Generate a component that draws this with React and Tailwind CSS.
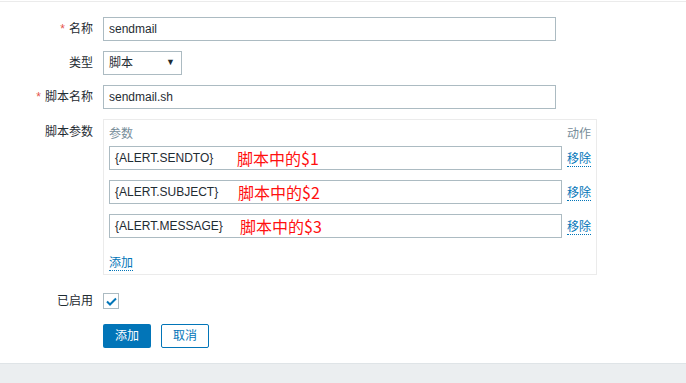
import React from "react";

const font = { fontFamily: '"Liberation Sans", Arial, "Noto Sans CJK SC", sans-serif' };

// red notes are drawn over the inputs, like an annotation
const params = [
  { value: "{ALERT.SENDTO}", note: "脚本中的$1", left: "left-[127px]" },
  { value: "{ALERT.SUBJECT}", note: "脚本中的$2", left: "left-[128px]" },
  { value: "{ALERT.MESSAGE}", note: "脚本中的$3", left: "left-[130px]" },
];

const Label = ({ required, children, className = "" }) => (
  <div className={`w-[93px] shrink-0 text-right text-[12px] text-[#1f2c33] ${className}`}>
    {required && <span className="text-[#e5534b] mr-[4px]">*</span>}
    {children}
  </div>
);

const TextInput = ({ value, className = "" }) => (
  <div className={`h-[24px] border border-[#acbbc2] bg-white pl-[5px] flex items-center text-[12px] text-[#1f2c33] ${className}`}>
    {value}
  </div>
);

const LinkText = ({ children }) => (
  <span className="inline-block leading-[14px] text-[12px] text-[#0275b8] border-b border-dotted border-[#0275b8]">
    {children}
  </span>
);

export default function App() {
  return (
    <div className="w-[686px] h-[383px] bg-white flex flex-col" style={font}>
      <div className="mt-px border-t border-[#ebebeb]" />
      <div className="pt-[15px] flex flex-col">
        <div className="flex items-center h-[24px]">
          <Label required>名称</Label>
          <TextInput value="sendmail" className="ml-[10px] w-[453px]" />
        </div>

        <div className="flex items-center h-[24px] mt-[10px]">
          <Label>类型</Label>
          <div className="ml-[10px] w-[79px] h-[24px] border border-[#acbbc2] bg-white pl-[5px] pr-[6px] flex items-center justify-between text-[12px] text-[#1f2c33]">
            <span>脚本</span>
            <span className="text-[9px]">▼</span>
          </div>
        </div>

        <div className="flex items-center h-[24px] mt-[10px]">
          <Label required>脚本名称</Label>
          <TextInput value="sendmail.sh" className="ml-[10px] w-[453px]" />
        </div>

        <div className="flex mt-[10px]">
          <Label className="pt-[4px]">脚本参数</Label>
          <div className="ml-[10px] w-[494px] h-[156px] border border-[#ebebeb] px-[5px] pt-[7px]">
            <div className="flex justify-between h-[14px] leading-[14px] text-[12px] text-[#768d99]">
              <span>参数</span>
              <span>动作</span>
            </div>
            <div className="mt-[5px] flex flex-col gap-[10px]">
              {params.map((p) => (
                <div key={p.value} className="flex items-center h-[24px]">
                  <div className="relative w-[453px] h-[24px] border border-[#acbbc2] bg-white pl-[5px] flex items-center text-[12px] text-[#1f2c33]">
                    <span>{p.value}</span>
                    <span
                      className={`absolute ${p.left} top-1/2 -translate-y-1/2 text-[16px] leading-none text-[#ff1010]`}
                      style={{ fontFamily: '"Noto Sans CJK SC", sans-serif' }}
                    >
                      {p.note}
                    </span>
                  </div>
                  <div className="ml-[5px]">
                    <LinkText>移除</LinkText>
                  </div>
                </div>
              ))}
            </div>
            <div className="mt-[12px]">
              <LinkText>添加</LinkText>
            </div>
          </div>
        </div>

        <div className="flex items-center h-[16px] mt-[18px]">
          <Label>已启用</Label>
          <div className="ml-[10px] w-[16px] h-[16px] border border-[#acbbc2] bg-white flex items-center justify-center">
            <svg width="11" height="9" viewBox="0 0 11 9">
              <path d="M1 4.5 L4 7.5 L10 1.5" fill="none" stroke="#0275b8" strokeWidth="2" />
            </svg>
          </div>
        </div>

        <div className="flex mt-[15px] ml-[103px] gap-[10px]">
          <button className="w-[48px] h-[24px] rounded-[2px] bg-[#0275b8] text-white text-[12px]">添加</button>
          <button className="w-[48px] h-[24px] rounded-[2px] border border-[#0275b8] bg-white text-[#0275b8] text-[12px]">取消</button>
        </div>
      </div>
      <div className="mt-[15px] flex-1 border-t border-[#dfe4e7] bg-[#ebeef0]" />
    </div>
  );
}
